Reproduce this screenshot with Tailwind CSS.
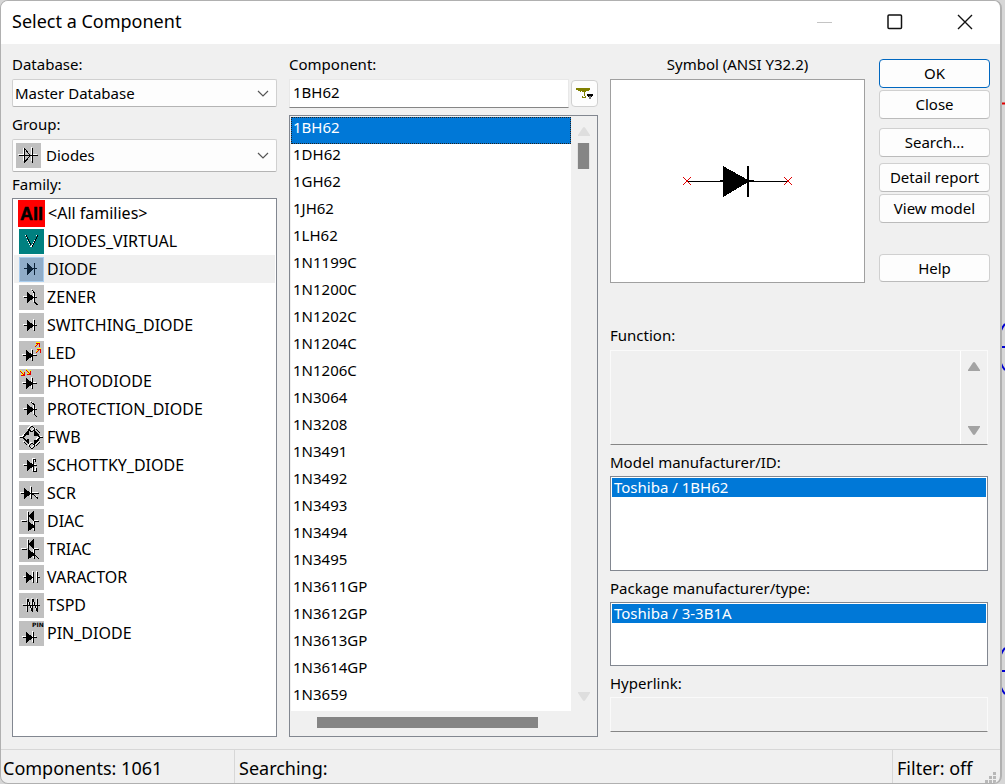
<!DOCTYPE html>
<html lang="en">
<head>
<meta charset="utf-8">
<title>Select a Component</title>
<script src="https://cdn.jsdelivr.net/npm/@tailwindcss/browser@4"></script>
</head>
<body class="relative flex min-h-screen bg-[#d6d6d6] pr-[3px] text-base text-black font-['Noto_Sans','Open_Sans',sans-serif]">

<!-- Schematic canvas visible behind the dialog -->
<svg class="absolute right-0 top-0" width="5" height="784" fill="none" stroke="#0000d0" stroke-width="2" aria-hidden="true">
  <path d="M0 103.500h5" stroke="#e00000"/>
  <path d="M5 324q-5 6-5 12M0 347h5M0 358q0 6 5 12M5 648q-5 6-5 12M0 671h5M0 682q0 6 5 12"/>
</svg>

<main class="relative flex flex-1 flex-col overflow-hidden rounded-lg border-y border-l border-r-2 border-[#b0b0b0] bg-[#f0f0f0]">
  <header class="flex h-[43px] items-center bg-white pl-[11px]">
    <h1 class="flex-1 pb-1 text-lg">Select a Component</h1>
    <button class="flex h-full w-[70px] items-center justify-center pb-[2px]" aria-label="Minimize"><svg width="16" height="16" stroke="#c4c4c4"><path d="M0 8.500h15"/></svg></button>
    <button class="flex h-full w-[70px] items-center justify-center pb-[2px]" aria-label="Maximize"><svg width="16" height="16" fill="none" stroke="#111" stroke-width="1.500"><rect x="1" y="1" width="13.500" height="13.500" rx="1"/></svg></button>
    <button class="flex h-full w-[70px] items-center justify-center pb-[2px]" aria-label="Close window"><svg width="16" height="16" stroke="#111" stroke-width="1.400"><path d="M1 1l14 14M15 1L1 15"/></svg></button>
  </header>

  <div class="grid flex-1 grid-cols-[265fr_309fr_380fr] gap-x-3 pb-3 pl-[11px] pr-[10px] pt-[7px]">
    <!-- Database, group and family -->
    <section class="flex flex-col">
      <label for="db" class="h-7 text-[15px] leading-[26px]">Database:</label>
      <div class="relative">
        <select id="db" class="h-7 w-full appearance-none rounded-xs border border-[#d0d0d0] border-b-[#b4b4b4] bg-[#fdfdfd] px-[2px] text-[15px]"><option>Master Database</option></select>
        <svg class="pointer-events-none absolute right-2 top-[11px]" width="12" height="8" fill="none" stroke="#555" stroke-width="1.200"><path d="M1 1l5 5 5-5"/></svg>
      </div>
      <label for="grp" class="h-8 pt-1 text-[15px] leading-[26px]">Group:</label>
      <div class="relative flex h-[33px] items-center rounded-xs border border-[#d0d0d0] border-b-[#b4b4b4] bg-[#fdfdfd] pl-[3px]">
        <svg class="shrink-0 bg-[#c0c0c0]" width="25" height="25" fill="none" shape-rendering="crispEdges" aria-hidden="true"><path d="M2 11.500h6M16 11.500h5M7.500 5v13M15.500 4v14" stroke="#fff"/><path d="M3 12.500h19M8.500 5v15M9 6l5 6.500-5 6.500M16.500 5v15" stroke="#000"/></svg>
        <select id="grp" class="h-full w-full appearance-none bg-transparent pl-[5px] text-[15px]"><option>Diodes</option></select>
        <svg class="pointer-events-none absolute right-[7px] top-3" width="12" height="8" fill="none" stroke="#555" stroke-width="1.200"><path d="M1 1l5 5 5-5"/></svg>
      </div>
      <h2 id="fam" class="h-[26px] text-[15px] leading-6">Family:</h2>
      <ul id="families" role="listbox" aria-labelledby="fam" class="flex-1 border border-[#828790] bg-white px-px text-base"></ul>
    </section>

    <!-- Component search and result list -->
    <section class="flex flex-col">
      <label for="comp" class="h-7 text-[15px] leading-[26px]">Component:</label>
      <div class="flex items-center">
        <input id="comp" value="1BH62" class="h-[29px] min-w-0 flex-1 border border-[#e8e8e8] border-b-[#868686] bg-white px-[3px] pb-[3px] text-[15px]">
        <button aria-label="Filter" class="ml-[2px] flex size-[27px] items-center justify-center rounded border border-[#d0d0d0] bg-[#fdfdfd]">
          <svg width="18" height="13" shape-rendering="crispEdges"><path d="M0 1h14v2h-1v1h-2v1h-2v4h1v2H6V9h1V5H4V4H2V3H0z" fill="#808000"/><path d="M5 4h6v2H9v4H7V6H5z" fill="#fff"/><path d="M6 4h4v1H9v4H8V5H6z" fill="#808000"/><path d="M11 7h6v2h-1v1h-4V9h-1z" fill="#000"/><path d="M13 9h2v3h-2z" fill="#777"/></svg>
        </button>
      </div>
      <div class="mt-[7px] flex flex-1 flex-col border border-[#828790] bg-[#f0f0f0] p-px">
        <div class="flex">
          <ul id="components" role="listbox" aria-label="Components" class="flex-1 bg-white text-[15px]"></ul>
          <div class="flex w-[25px] flex-col items-center pb-[10px] pt-[10px]">
            <svg width="12" height="9" fill="#dedede"><path d="M6 0q1 0 2 2l4 6v1H0V8l4-6q1-2 2-2z"/></svg>
            <div class="mt-[7px] h-[26px] w-[13px] border-x border-[#e2e2e2] bg-[#858585]"></div>
            <svg class="mt-auto" width="12" height="9" fill="#dedede"><path d="M6 9q1 0 2-2l4-6V0H0v1l4 6q1 2 2 2z"/></svg>
          </div>
        </div>
        <div class="pl-[26px] pt-[6px]"><div class="h-[11px] w-[221px] bg-[#858585]"></div></div>
      </div>
    </section>

    <!-- Preview, actions and details -->
    <section class="flex flex-col">
      <div class="flex gap-[14px]">
        <figure class="flex-1">
          <figcaption class="h-7 text-center text-[15px] leading-[26px]">Symbol (ANSI Y32.2)</figcaption>
          <div class="flex h-[204px] items-center justify-center border border-[#a0a0a0] bg-white">
            <svg width="112" height="34" fill="none" shape-rendering="crispEdges" aria-label="Diode symbol" role="img"><path d="M5 17.500h102" stroke="#000"/><path d="M41 2l27 15-27 16z" fill="#000"/><path d="M66 2v31" stroke="#000" stroke-width="2"/><path d="M38 17h34" stroke="#000" stroke-width="2"/><path d="M1 13l8 8M9 13l-8 8M102 13l8 8M110 13l-8 8" stroke="#e00000"/></svg>
          </div>
        </figure>
        <div class="flex w-[111px] flex-col pt-2 text-[15px]">
          <button class="h-[29px] rounded border border-[#0067c0] bg-[#fdfdfd]">OK</button>
          <button class="mt-[2px] h-[29px] rounded border border-[#d0d0d0] border-b-[#bbb] bg-[#fdfdfd]">Close</button>
          <button class="mt-[9px] h-[29px] rounded border border-[#d0d0d0] border-b-[#bbb] bg-[#fdfdfd]">Search...</button>
          <button class="mt-[6px] h-[29px] rounded border border-[#d0d0d0] border-b-[#bbb] bg-[#fdfdfd]">Detail report</button>
          <button class="mt-[2px] h-[29px] rounded border border-[#d0d0d0] border-b-[#bbb] bg-[#fdfdfd]">View model</button>
          <button class="mt-[31px] h-[28px] rounded border border-[#d0d0d0] border-b-[#bbb] bg-[#fdfdfd]">Help</button>
        </div>
      </div>
      <div class="mr-[2px] flex flex-1 flex-col pt-[39px] text-[15px]">
        <label for="fn" class="h-7 leading-[26px]">Function:</label>
        <div class="flex h-[95px] border border-x-[#fafafa] border-b-[#868686] border-t-[#fafafa]">
          <textarea id="fn" readonly class="min-w-0 flex-1 resize-none border-r border-white"></textarea>
          <div class="flex w-[26px] flex-col items-center justify-between pb-[9px] pr-[1px] pt-[11px]">
            <svg width="12" height="9" fill="#a3a3a3"><path d="M6 0q1 0 2 2l4 6v1H0V8l4-6q1-2 2-2z"/></svg>
            <svg width="12" height="9" fill="#a3a3a3"><path d="M6 9q1 0 2-2l4-6V0H0v1l4 6q1 2 2 2z"/></svg>
          </div>
        </div>
        <h2 id="mod" class="h-[31px] pt-1 leading-[26px]">Model manufacturer/ID:</h2>
        <ul role="listbox" aria-labelledby="mod" class="h-[95px] border border-[#828790] bg-white p-px"><li role="option" aria-selected="true" class="h-[19px] bg-[#0078d7] pl-[2px] leading-[19px] text-white">Toshiba / 1BH62</li></ul>
        <h2 id="pkg" class="h-[31px] pt-1 leading-[26px]">Package manufacturer/type:</h2>
        <ul role="listbox" aria-labelledby="pkg" class="h-[64px] border border-[#828790] bg-white p-px"><li role="option" aria-selected="true" class="h-[19px] bg-[#0078d7] pl-[2px] leading-[19px] text-white">Toshiba / 3-3B1A</li></ul>
        <label for="link" class="h-[31px] pt-1 leading-[26px]">Hyperlink:</label>
        <input id="link" readonly class="h-[35px] border border-x-[#fafafa] border-b-[#868686] border-t-[#fafafa] px-1">
      </div>
    </section>
  </div>

  <footer class="relative flex h-[34px] items-center border-t border-[#d7d7d7] text-lg">
    <p class="h-full w-[234px] border-r border-[#d7d7d7] pl-[2px] leading-9">Components: 1061</p>
    <p class="h-full flex-1 pl-1 leading-9">Searching:</p>
    <p class="h-full w-[108px] border-l border-[#d7d7d7] pl-1 leading-9">Filter: off</p>
    <svg class="absolute bottom-0 right-1" width="11" height="11" fill="#b8b8b8" aria-hidden="true"><path d="M8 0h3v3H8zM4 4h3v3H4zM8 4h3v3H8zM0 8h3v3H0zM4 8h3v3H4zM8 8h3v3H8z"/></svg>
  </footer>
</main>

<script>
const svg = (inner, cls) => `<svg class="${cls || 'bg-[#c0c0c0]'} shrink-0" width="25" height="25" fill="none" shape-rendering="crispEdges" aria-hidden="true">${inner}</svg>`;
// Black strokes and fills over a white highlight shifted up and left
const icon = (lines, fills = '', extra = '') => svg(`<path d="${lines}" stroke="#fff" transform="translate(-1 -1)"/><path d="${lines}" stroke="#000"/><path d="${fills}" fill="#000"/>${extra}`);
const arrows = d => `<path d="${d}" stroke="#ff0" transform="translate(0 -1)"/><path d="${d}" stroke="#e00000"/>`;
const families = [
  ['&lt;All families&gt;', '<svg class="-ml-px shrink-0 bg-[#f00]" width="27" height="27" aria-hidden="true"><text x="2" y="20" font-family="Liberation Sans" font-size="18" font-weight="bold" stroke="#000" stroke-width="0.500">All</text></svg>'],
  ['DIODES_VIRTUAL', svg('<path d="M7 6l6 12 6-12" stroke="#000"/><path d="M6 6l6 12 6-12" stroke="#fff" stroke-dasharray="1 1"/>', 'bg-[#008080]')],
  ['DIODE', svg('<path d="M5 11.500h13M15.500 6v12" stroke="#0c2238"/><path d="M8 6v12l7-6z" fill="#0c2238"/><path d="M.5.500h24v24H.5z" stroke="#a9cdee"/>', 'bg-[#90acc8]')],
  ['ZENER', icon('M5 12.500h13M13 5l2.500 3v9l3 3', 'M8 6.500v12l7-6z')],
  ['SWITCHING_DIODE', icon('M5 12.500h13M15.500 7v11', 'M8 6.500v12l7-6z')],
  ['LED', icon('M4 14.500h14M13.500 9v11', 'M7 8.500v12l7-6z', arrows('M16 6l4-4M17 2.500h4M20.500 2v4M17 12l4-4M18 8.500h4M21.500 8v4'))],
  ['PHOTODIODE', icon('M4 14.500h14M13.500 9v11', 'M7 8.500v12l7-6z', arrows('M1 2l4 4M2 6.500h4M5.500 3v4M7 1l4 4M8 5.500h4M11.500 2v4'))],
  ['PROTECTION_DIODE', icon('M5 12.500h13M12 5l3.500 3v9l2 3', 'M8 6.500v12l7-6z')],
  ['FWB', icon('M10 4l3-3 3 3-3 3zM10 21l3-3 3 3-3 3zM1 12.500h3l3-3M4 12.500l3 3M24 12.500h-3l-3-3M21 12.500l-3 3M9 4l3 3M5 17l3 3M17 4l4 4M17 21l4-4', 'M4 10l6-5v5zM15 5v6l5-1zM5 15l5-1v6zM15 15h5l-5 5z')],
  ['SCHOTTKY_DIODE', icon('M5 12.500h13M14.500 6v12.500h3M17 15v4M14 6.500h3M16.500 6v3', 'M8 6.500v12l7-6z')],
  ['SCR', icon('M2 12.500h18M12.500 6v12M13 12.500l6 5', 'M5 6.500v12l7-6z')],
  ['DIAC', icon('M3 12.500h5M16 12.500h4M9.500 3v9M15.500 12v10', 'M15 2v10l-6-5zM9 11.500v11l7-5z')],
  ['TRIAC', icon('M3 12.500h5M16 12.500h4M9.500 3v9M15.500 12v10M15 17l5 5', 'M15 2v10l-6-5zM9 11.500v11l7-5z')],
  ['VARACTOR', icon('M5 12.500h9M18 12.500h3M14.500 7v11M18.500 7v11', 'M7 6.500v12l7-6z')],
  ['TSPD', icon('M4 12.500h17M8.500 6v13M9 6l4 12M13.500 6v13M14 6l4 12M18.500 6v13').replace('stroke="#fff"', 'stroke="#e4e4e4"')],
  ['PIN_DIODE', icon('M4 16.500h14M14.500 11v11', 'M7 10.500v12l7-6z', '<text x="13" y="6" font-family="DejaVu Sans" font-size="6" font-weight="bold" fill="#000">PIN</text>')]
];
document.getElementById('families').innerHTML = families.map(([n, icon]) =>
  `<li role="option" aria-selected="${n === 'DIODE'}" class="flex h-7 items-center gap-[3px] pl-[5px] ${n === 'DIODE' ? 'bg-[#f0f0f0]' : ''}">${icon}<span>${n}</span></li>`).join('');
const parts = '1BH62 1DH62 1GH62 1JH62 1LH62 1N1199C 1N1200C 1N1202C 1N1204C 1N1206C 1N3064 1N3208 1N3491 1N3492 1N3493 1N3494 1N3495 1N3611GP 1N3612GP 1N3613GP 1N3614GP 1N3659'.split(' ');
document.getElementById('components').innerHTML = parts.map((p, i) =>
  `<li role="option" aria-selected="${i === 0}" class="h-[27px] pl-[2px] leading-5 ${i === 0 ? 'bg-[#0078d7] text-white outline-1 -outline-offset-1 outline-dotted outline-[#222]' : ''}">${p}</li>`).join('');
</script>
</body>
</html>
